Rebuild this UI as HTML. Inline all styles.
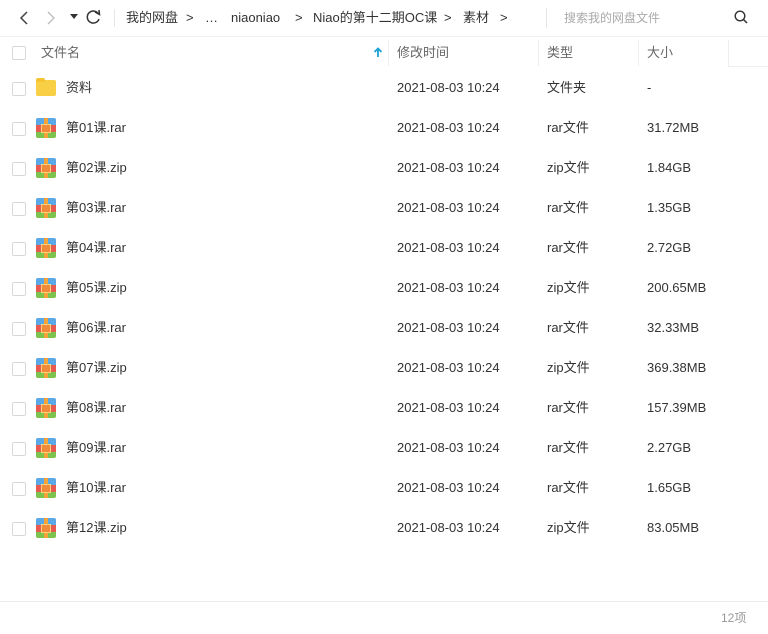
<!DOCTYPE html>
<html><head><meta charset="utf-8"><style>
body{margin:0;width:768px;height:634px;background:#fff;font-family:"Liberation Sans","Noto Sans CJK SC",sans-serif;color:#333;position:relative;overflow:hidden;font-size:13px;line-height:16px}
.a{position:absolute;white-space:nowrap;line-height:16px}
.cb{position:absolute;left:12px;width:12px;height:12px;border:1px solid #d8d8d8;border-radius:2px;background:#fff}
.g{color:#666}
.ic{position:absolute;left:36px;width:20px;height:20px;border-radius:2px;overflow:hidden}
</style></head><body>
<svg class="a" style="left:18px;top:10px" width="14" height="16"><path d="M9 2 L3 8 L9 14" stroke="#444" stroke-width="1.5" fill="none"/></svg>
<svg class="a" style="left:44px;top:10px" width="14" height="16"><path d="M4 2 L10 8 L4 14" stroke="#bbb" stroke-width="1.3" fill="none"/></svg>
<svg class="a" style="left:70px;top:14px" width="8" height="6"><path d="M0 0 L8 0 L4 5Z" fill="#333"/></svg>
<svg class="a" style="left:86px;top:9px" width="16" height="16"><path d="M12.5 5 A6 6 0 1 0 13 10" stroke="#333" stroke-width="1.5" fill="none"/><path d="M9 3 L13.5 5.5 L13 1" stroke="#333" stroke-width="1.5" fill="none"/></svg>
<div class="a" style="left:114px;top:9px;width:1px;height:18px;background:#e5e5e5"></div>
<div class="a" style="left:126px;top:10px">我的网盘</div>
<div class="a" style="left:186px;top:10px">&gt;</div>
<div class="a" style="left:205px;top:10px">…</div>
<div class="a" style="left:231px;top:10px">niaoniao</div>
<div class="a" style="left:295px;top:10px">&gt;</div>
<div class="a" style="left:313px;top:10px">Niao的第十二期OC课</div>
<div class="a" style="left:444px;top:10px">&gt;</div>
<div class="a" style="left:463px;top:10px">素材</div>
<div class="a" style="left:500px;top:10px">&gt;</div>
<div class="a" style="left:546px;top:8px;width:1px;height:20px;background:#e5e5e5"></div>
<div class="a" style="left:564px;top:10px;color:#aaa;font-size:12px">搜索我的网盘文件</div>
<svg class="a" style="left:734px;top:10px" width="14" height="14"><circle cx="6" cy="6" r="4.8" stroke="#333" stroke-width="1.4" fill="none"/><path d="M9.5 9.5 L13 13" stroke="#333" stroke-width="1.5"/></svg>
<div class="a" style="left:0;top:36px;width:768px;height:1px;background:#f0f0f0"></div>
<div class="cb" style="top:46px"></div>
<div class="a g" style="left:41px;top:45px">文件名</div>
<svg class="a" style="left:373px;top:47px" width="10" height="11"><path d="M5 10 L5 2 M1.5 5 L5 1.5 L8.5 5" stroke="#1aa0d6" stroke-width="1.8" fill="none"/></svg>
<div class="a" style="left:388px;top:40px;width:1px;height:26px;background:#eee"></div>
<div class="a g" style="left:397px;top:45px">修改时间</div>
<div class="a" style="left:538px;top:40px;width:1px;height:26px;background:#eee"></div>
<div class="a g" style="left:547px;top:45px">类型</div>
<div class="a" style="left:638px;top:40px;width:1px;height:26px;background:#eee"></div>
<div class="a g" style="left:647px;top:45px">大小</div>
<div class="a" style="left:728px;top:40px;width:1px;height:27px;background:#eee"></div>
<div class="a" style="left:728px;top:66px;width:40px;height:1px;background:#eee"></div>
<div id="rows"></div>
<div class="cb" style="top:82px"></div>
<div class="a" style="left:36px;top:80px;width:20px;height:16px;background:#f9cf45;border-radius:2px"></div>
<div class="a" style="left:36px;top:78px;width:9px;height:4px;background:#f6c433;border-radius:2px 2px 0 0"></div>
<div class="a" style="left:66px;top:80px">资料</div>
<div class="a" style="left:397px;top:80px">2021-08-03 10:24</div>
<div class="a" style="left:547px;top:80px">文件夹</div>
<div class="a" style="left:647px;top:80px">-</div>
<script>
var d=[["01","rar","31.72MB"],["02","zip","1.84GB"],["03","rar","1.35GB"],["04","rar","2.72GB"],["05","zip","200.65MB"],["06","rar","32.33MB"],["07","zip","369.38MB"],["08","rar","157.39MB"],["09","rar","2.27GB"],["10","rar","1.65GB"],["12","zip","83.05MB"]];
var h="";d.forEach(function(r,i){var y=128+i*40;
h+='<div class="cb" style="top:'+(y-6)+'px"></div>';
h+='<div class="ic" style="top:'+(y-10)+'px"><div style="height:7px;background:#5aa9e6"></div><div style="height:7px;background:#e9594f"></div><div style="height:6px;background:#7cc24e"></div><div style="position:absolute;left:8px;top:0;width:4px;height:20px;background:#f2a33a"></div><div style="position:absolute;left:5px;top:6px;width:8px;height:7px;border:1px solid #f7d27a;background:#f08a3c"></div></div>';
h+='<div class="a" style="left:66px;top:'+(y-8)+'px">第'+r[0]+'课.'+r[1]+'</div>';
h+='<div class="a" style="left:397px;top:'+(y-8)+'px">2021-08-03 10:24</div>';
h+='<div class="a" style="left:547px;top:'+(y-8)+'px">'+r[1]+'文件</div>';
h+='<div class="a" style="left:647px;top:'+(y-8)+'px">'+r[2]+'</div>';});
document.getElementById("rows").innerHTML=h;
</script>
<div class="a" style="left:0;top:601px;width:768px;height:1px;background:#ececec"></div>
<div class="a" style="left:721px;top:610px;color:#999;font-size:12px">12项</div>
</body></html>
